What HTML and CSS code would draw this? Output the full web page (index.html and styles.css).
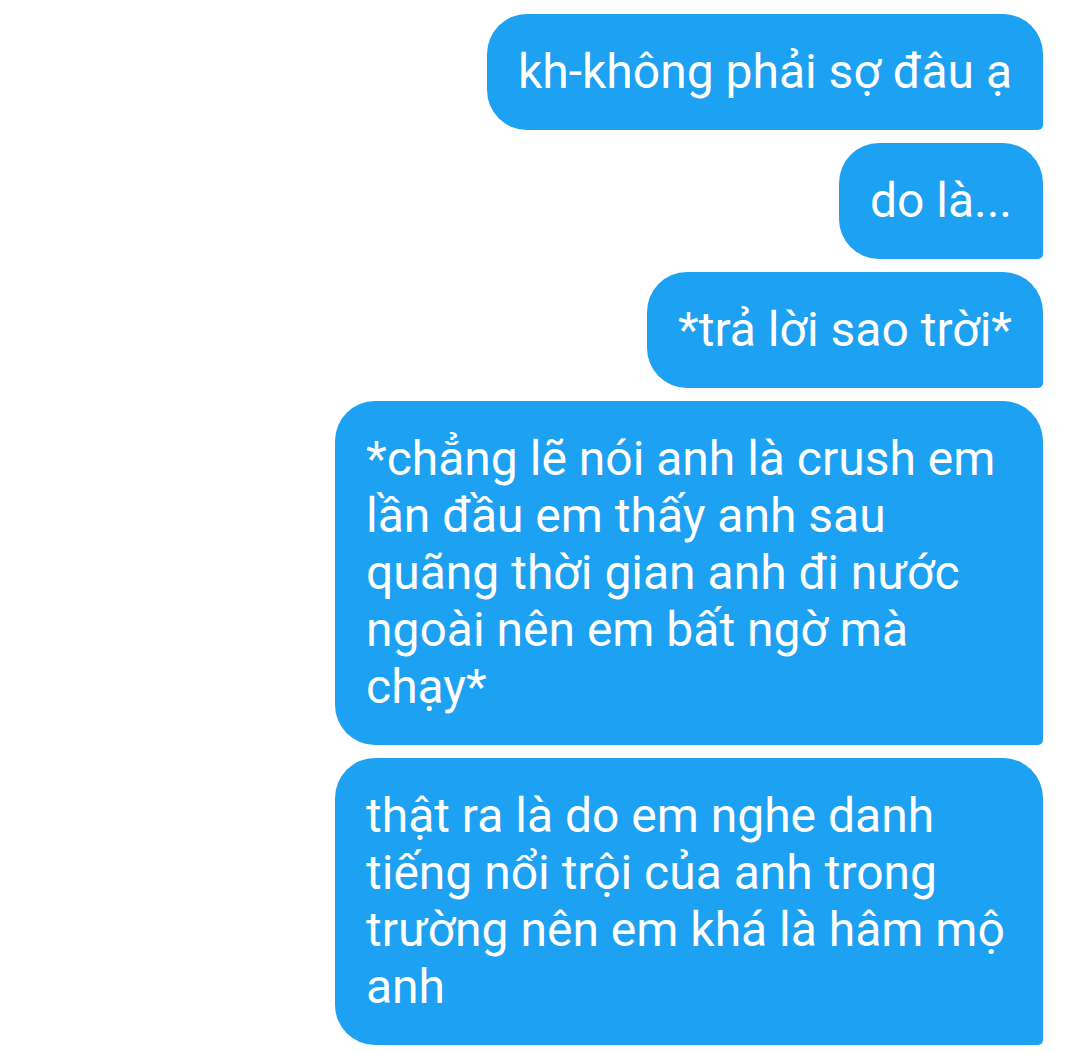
FILE: index.html
```html
<!DOCTYPE html>
<html lang="vi">
<head>
<meta charset="utf-8">
<link rel="stylesheet" href="styles.css">
</head>
<body>
<div class="thread">
  <div class="bubble">kh-không phải sợ đâu ạ</div>
  <div class="bubble">do là...</div>
  <div class="bubble">*trả lời sao trời*</div>
  <div class="bubble">*chẳng lẽ nói anh là crush em lần đầu em thấy anh sau quãng thời gian anh đi nước ngoài nên em bất ngờ mà chạy*</div>
  <div class="bubble">thật ra là do em nghe danh tiếng nổi trội của anh trong trường nên em khá là hâm mộ anh</div>
</div>
</body>
</html>
```
FILE: styles.css
```css
html, body {
  margin: 0;
  padding: 0;
  background: #ffffff;
}
.thread {
  display: flex;
  flex-direction: column;
  align-items: flex-end;
  gap: 13px;
  padding: 14px 33px 0 0;
}
.bubble {
  max-width: 708px;
  box-sizing: border-box;
  background: #1da1f2;
  color: #ffffff;
  font-family: Roboto, "Noto Sans", sans-serif;
  font-size: 48px;
  line-height: 57px;
  padding: 29px 31px 30px 31px;
  border-radius: 40px 40px 5px 40px;
}
```
